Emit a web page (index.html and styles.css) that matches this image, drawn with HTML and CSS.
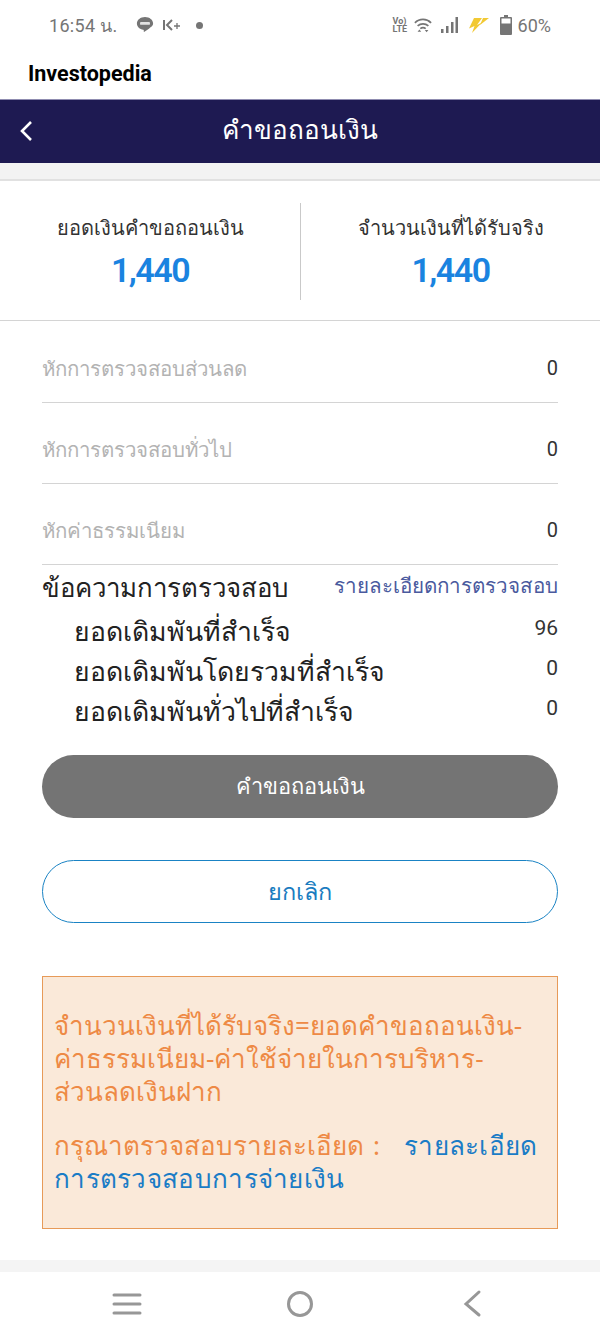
FILE: index.html
```html
<!DOCTYPE html>
<html lang="th">
<head>
<meta charset="utf-8">
<title>คำขอถอนเงิน</title>
<link rel="stylesheet" href="styles.css">
</head>
<body>
<div class="status">
  <div class="status-left">
    <span class="time">16:54 น.</span>
    <svg class="ic-line" width="18" height="18" viewBox="0 0 20 20"><path d="M10 1C5 1 1 4.200 1 8.300c0 3.700 3.200 6.500 7.100 7 .7.100.6.900.5 1.800 0 .5.300.7.800.4 2.100-1.300 4.700-2.900 6.400-4.600C17.700 11.500 19 10.100 19 8.300 19 4.200 15 1 10 1z" fill="#757575"/><rect x="4.500" y="6.800" width="11" height="3" rx="1" fill="#fff" opacity=".8"/></svg>
    <svg class="ic-k" width="20" height="14" viewBox="0 0 20 14"><path d="M2 2v10M10 2 5 7l5 5" fill="none" stroke="#757575" stroke-width="2"/><path d="M12 8h6M15 5v6" stroke="#757575" stroke-width="1.300"/></svg>
    <span class="dot"></span>
  </div>
  <div class="status-right">
    <span class="volte">Vo)<br>LTE</span>
    <svg class="ic-wifi" width="18" height="17" viewBox="0 0 20 18"><path d="M1 6c5-5 13-5 18 0M4 9.500c3.500-3 8.500-3 12 0M7 12.500c2-1.500 4-1.500 6 0" fill="none" stroke="#757575" stroke-width="1.900"/><path d="M4 16l2-2.500L8 16zM12 14l2 2.500 2-2.500z" fill="#757575"/></svg>
    <svg class="ic-sig" width="17" height="16" viewBox="0 0 17 16"><path d="M0 12h2.500v4H0zM5 9h2.500v7H5zM10 5h2.500v11H10zM14.500 0H17v16h-2.500z" fill="#757575"/></svg>
    <svg class="ic-bolt" width="21" height="17" viewBox="0 0 21 17"><path d="M6 1h8L9 8l5-2.500L4 16l2.500-7L1 11.500z" fill="#f2c933"/><path d="M15 1h6l-9 7 1-2.500z" fill="#f2c933"/></svg>
    <svg class="ic-bat" width="12" height="20" viewBox="0 0 12 20"><path d="M4 0h4v2h3a1 1 0 0 1 1 1v16a1 1 0 0 1-1 1H1a1 1 0 0 1-1-1V3a1 1 0 0 1 1-1h3z" fill="#757575"/><rect x="1.500" y="3.500" width="9" height="5" fill="#fff"/></svg>
    <span class="pct">60%</span>
  </div>
</div>
<div class="appname">Investopedia</div>
<header class="topbar">
  <svg class="back" width="16" height="24" viewBox="0 0 16 24"><path d="M13 3 4 12l9 9" fill="none" stroke="#fff" stroke-width="2.600"/></svg>
  <h1 class="title">คำขอถอนเงิน</h1>
</header>
<div class="strip"></div>
<section class="summary">
  <div class="sum-col">
    <div class="sum-label">ยอดเงินคำขอถอนเงิน</div>
    <div class="sum-val">1,440</div>
  </div>
  <div class="sum-col sum-col-r">
    <div class="sum-label">จำนวนเงินที่ได้รับจริง</div>
    <div class="sum-val">1,440</div>
  </div>
</section>
<section class="rows">
  <div class="row"><span>หักการตรวจสอบส่วนลด</span><b>0</b></div>
  <div class="row"><span>หักการตรวจสอบทั่วไป</span><b>0</b></div>
  <div class="row"><span>หักค่าธรรมเนียม</span><b>0</b></div>
</section>
<section class="audit">
  <div class="audit-head"><span class="audit-title">ข้อความการตรวจสอบ</span><a class="audit-link">รายละเอียดการตรวจสอบ</a></div>
  <div class="audit-row"><span>ยอดเดิมพันที่สำเร็จ</span><b>96</b></div>
  <div class="audit-row"><span>ยอดเดิมพันโดยรวมที่สำเร็จ</span><b>0</b></div>
  <div class="audit-row"><span>ยอดเดิมพันทั่วไปที่สำเร็จ</span><b>0</b></div>
</section>
<div class="actions">
  <button class="btn btn-fill">คำขอถอนเงิน</button>
  <button class="btn btn-line">ยกเลิก</button>
</div>
<section class="note">
  <p class="note-a">จำนวนเงินที่ได้รับจริง=ยอดคำขอถอนเงิน-<br>ค่าธรรมเนียม-ค่าใช้จ่ายในการบริหาร-<br>ส่วนลดเงินฝาก</p>
  <p class="note-b">กรุณาตรวจสอบรายละเอียด<span class="colon">:</span><a>รายละเอียด<br>การตรวจสอบการจ่ายเงิน</a></p>
</section>
<div class="gap"></div>
<div class="strip-b"></div>
<nav class="nav">
  <svg width="30" height="26" viewBox="0 0 30 26"><path d="M2 4h26M2 13h26M2 22h26" stroke="#979797" stroke-width="3" stroke-linecap="round"/></svg>
  <svg width="30" height="30" viewBox="0 0 30 30"><circle cx="15" cy="15" r="11.500" fill="none" stroke="#979797" stroke-width="3"/></svg>
  <svg width="30" height="30" viewBox="0 0 30 30"><path d="M22 3 9 15l13 11" fill="none" stroke="#979797" stroke-width="3" stroke-linecap="round"/></svg>
</nav>
</body>
</html>
```
FILE: styles.css
```css
* { box-sizing: border-box; }
html, body { margin: 0; padding: 0; }
body { width: 600px; height: 1336px; overflow: hidden; background: #fff; font-family: "Noto Sans", "Noto Sans CJK SC", sans-serif; color: #222; }
.status { height: 50px; display: flex; justify-content: space-between; align-items: center; padding: 0 49px; color: #757575; }
.status-left { display: flex; align-items: center; }
.time { font: 18px Roboto, "Noto Sans", sans-serif; letter-spacing: .3px; width: 87px; white-space: nowrap; }
.ic-k { margin-left: 8px; }
.dot { width: 7px; height: 7px; border-radius: 50%; background: #757575; margin-left: 14px; }
.status-right { display: flex; align-items: center; }
.volte { font: bold 9px/8px Roboto, sans-serif; color: #757575; width: 15px; }
.ic-wifi { margin-left: 6px; }
.ic-sig { margin-left: 9px; }
.ic-bolt { margin-left: 10px; }
.ic-bat { margin-left: 11px; }
.pct { font: 18px Roboto, sans-serif; margin-left: 6px; }
.appname { height: 49px; padding: 0 0 0 28px; font: bold 21.500px/48px Roboto, sans-serif; color: #000; }
.topbar { height: 64px; background: #1e1a52; border-top: 1px solid #8f8cb0; display: flex; align-items: center; justify-content: center; position: relative; padding-bottom: 4px; }
.back { position: absolute; left: 18px; top: 19px; }
.title { margin: 0; color: #fff; font-size: 26.100px; font-weight: 400; line-height: 1; }
.strip { height: 18px; background: #f3f3f3; border-bottom: 2px solid #e1e1e1; }
.summary { height: 140px; display: grid; grid-template-columns: 1fr 1fr; align-items: center; border-bottom: 1px solid #d4d4d4; }
.sum-col { height: 97px; margin-top: 2px; padding-top: 2px; text-align: center; display: flex; flex-direction: column; align-items: center; justify-content: center; gap: 6px; }
.sum-col-r { border-left: 1px solid #c9c9c9; }
.sum-label { font-size: 20px; line-height: 28px; color: #333; }
.sum-val { font: 600 34px/44px Roboto, sans-serif; color: #1a83e0; letter-spacing: -1.500px; }
.rows { padding: 1px 42px 0; }
.row { height: 81px; display: flex; justify-content: space-between; align-items: center; border-bottom: 1px solid #d4d4d4; padding-top: 14px; font-size: 20.400px; color: #b3b3b3; }
.row b { font: 400 20px Roboto, sans-serif; color: #333; margin-top: -2px; }
.audit { padding: 0 42px; }
.audit-head { height: 46px; display: flex; justify-content: space-between; align-items: center; padding-bottom: 2px; }
.audit-title { font-size: 25.800px; color: #222; }
.audit-link { font-size: 20.600px; color: #4a5a9e; margin-top: -3px; }
.audit-row { height: 40px; display: flex; justify-content: space-between; align-items: center; padding-left: 32px; font-size: 26.600px; color: #222; }
.audit-row b { font: 400 21px Roboto, sans-serif; color: #333; margin-top: -6px; }
.actions { padding: 24px 42px 0; display: flex; flex-direction: column; gap: 42px; }
.btn { height: 63px; border-radius: 32px; font-family: inherit; }
.btn-fill { background: #747474; border: 0; color: #fff; font-size: 21.800px; }
.btn-line { background: #fff; border: 1px solid #1a83c4; color: #1a7cc0; font-size: 23.500px; }
.note { margin: 53px 42px 0; height: 253px; background: #fae9d9; border: 1px solid #e79a58; padding: 32px 11px 0; font-size: 26px; line-height: 33px; color: #ee8a45; white-space: nowrap; }
.note p { margin: 0; }
.note .note-b { margin-top: 21px; }
.colon { margin: 0 24px 0 9px; }
.note a { color: #1a7cc6; letter-spacing: .3px; }
.gap { height: 31px; }
.strip-b { height: 12px; background: #f4f4f4; }
.nav { height: 64px; display: flex; justify-content: space-between; align-items: center; padding: 0 113px 0 112px; }
```
